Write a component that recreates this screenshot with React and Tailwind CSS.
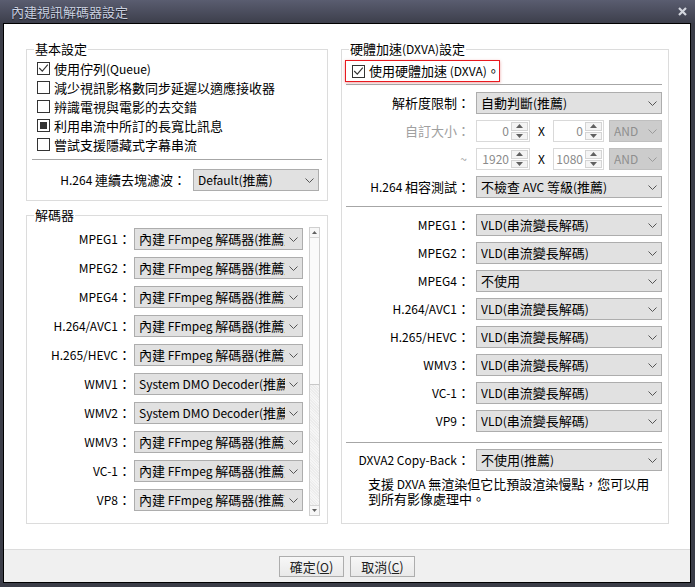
import React from "react";

function T({ children }) {
  const parts = String(children).split(/([\x20-\x7E]+)/);
  return parts.map((p, i) =>
    p === "" ? null : /^[\x20-\x7E]+$/.test(p) ? (
      <span key={i} className="text-[12px]">
        {p}
      </span>
    ) : (
      <React.Fragment key={i}>{p}</React.Fragment>
    )
  );
}

function Chevron({ color = "#555" }) {
  return (
    <svg width="9" height="5" viewBox="0 0 9 5">
      <path d="M0.5 0.5 L4.5 4.5 L8.5 0.5" fill="none" stroke={color} strokeWidth="1" />
    </svg>
  );
}

function Select({ text, className = "", disabled = false }) {
  return (
    <div
      className={`flex h-[22px] shrink-0 items-center border pl-[4px] ${
        disabled ? "border-[#bfbfbf] bg-[#cccccc] text-[#8f8f8f]" : "border-[#adadad] bg-[#e1e1e1] text-black"
      } ${className}`}
    >
      <span className="flex-1 overflow-hidden whitespace-nowrap leading-[20px]">
        <T>{text}</T>
      </span>
      <span className="flex w-[17px] shrink-0 justify-center">
        <Chevron color={disabled ? "#9a9a9a" : "#555"} />
      </span>
    </div>
  );
}

function Check({ state }) {
  return (
    <div className="flex h-[13px] w-[13px] shrink-0 items-center justify-center border border-[#333333] bg-white">
      {state === "on" && (
        <svg width="11" height="11" viewBox="0 0 11 11">
          <path d="M1.2 5 L4.3 8.2 L9.8 1.6" fill="none" stroke="#333" strokeWidth="1.1" />
        </svg>
      )}
      {state === "mixed" && <div className="h-[7px] w-[7px] bg-[#333333]" />}
    </div>
  );
}

function Tri({ up }) {
  return (
    <svg width="7" height="4" viewBox="0 0 7 4">
      {up ? <path d="M0 4 L3.5 0 L7 4 Z" fill="#606060" /> : <path d="M0 0 L3.5 4 L7 0 Z" fill="#606060" />}
    </svg>
  );
}

function Spin({ value, className = "" }) {
  return (
    <div className={`flex h-[22px] shrink-0 border border-[#d9d9d9] bg-white ${className}`}>
      <span className="flex-1 pr-[2px] text-right text-[12px] leading-[20px] text-[#8a8a8a]">{value}</span>
      <div className="flex w-[18px] flex-col gap-[1px] py-[1px] pr-[1px]">
        <div className="flex flex-1 items-center justify-center border border-[#d4d4d4] bg-[#f4f4f4]">
          <Tri up />
        </div>
        <div className="flex flex-1 items-center justify-center border border-[#d4d4d4] bg-[#f4f4f4]">
          <Tri />
        </div>
      </div>
    </div>
  );
}

function Sep({ className = "" }) {
  return <div className={`h-[1px] bg-[#a6a6a6] ${className}`} />;
}

const basic = [
  ["on", "使用佇列(Queue)"],
  ["off", "減少視訊影格數同步延遲以適應接收器"],
  ["off", "辨識電視與電影的去交錯"],
  ["mixed", "利用串流中所訂的長寬比訊息"],
  ["off", "嘗試支援隱藏式字幕串流"],
];

const FF = "內建 FFmpeg 解碼器(推薦)";
const decoders = [
  ["MPEG1", FF],
  ["MPEG2", FF],
  ["MPEG4", FF],
  ["H.264/AVC1", FF],
  ["H.265/HEVC", FF],
  ["WMV1", "System DMO Decoder(推薦)"],
  ["WMV2", "System DMO Decoder(推薦)"],
  ["WMV3", FF],
  ["VC-1", FF],
  ["VP8", FF],
];

const VLD = "VLD(串流變長解碼)";
const hw = [
  ["MPEG1", VLD],
  ["MPEG2", VLD],
  ["MPEG4", "不使用"],
  ["H.264/AVC1", VLD],
  ["H.265/HEVC", VLD],
  ["WMV3", VLD],
  ["VC-1", VLD],
  ["VP9", VLD],
];

function Legend({ children }) {
  return (
    <legend className="ml-[7px] px-[1px] leading-[14px] text-black">
      <T>{children}</T>
    </legend>
  );
}

export default function App() {
  return (
    <div className="flex h-[587px] w-[695px] flex-col bg-[#3b3d48] font-['Noto_Sans_CJK_TC',sans-serif] text-[13px] leading-[16px] text-black">
      {/* title bar */}
      <div className="flex h-[23px] shrink-0 items-center justify-between bg-gradient-to-b from-[#5a5d70] to-[#3d3f4c] pl-[11px] pr-[8px]">
        <span className="text-[13px] leading-[16px] text-[#c9d0e0] [text-shadow:0_1px_1px_#1c1d24]">內建視訊解碼器設定</span>
        <svg width="9" height="9" viewBox="0 0 9 9">
          <path d="M1 1 L8 8 M8 1 L1 8" stroke="#d3d6de" strokeWidth="2.2" />
        </svg>
      </div>

      {/* client */}
      <div className="mb-[4px] ml-[3px] mr-[4px] flex flex-1 flex-col border border-black bg-white">
        <div className="flex flex-1 gap-[13px] pl-[22px] pt-[18px]">
          {/* left column */}
          <div className="flex w-[302px] flex-col gap-[7px]">
            <fieldset className="h-[159px] border border-[#dcdcdc]">
              <Legend>基本設定</Legend>
              <div className="flex flex-col pt-[3px]">
                {basic.map(([s, t]) => (
                  <div key={t} className="flex h-[19px] items-center gap-[4px] pl-[10px]">
                    <Check state={s} />
                    <span className="whitespace-nowrap">
                      <T>{t}</T>
                    </span>
                  </div>
                ))}
                <Sep className="mx-[5px] mt-[5px]" />
                <div className="mt-[9px] flex items-center justify-end gap-[7px] pr-[8px]">
                  <span className="whitespace-nowrap">
                    <T>H.264 連續去塊濾波：</T>
                  </span>
                  <Select text="Default(推薦)" className="w-[126px]" />
                </div>
              </div>
            </fieldset>

            <fieldset className="h-[316px] border border-[#dcdcdc]">
              <Legend>解碼器</Legend>
              <div className="flex pt-[5px]">
                <div className="flex flex-col gap-[7px] pt-[1px]">
                  {decoders.map(([l, v]) => (
                    <div key={l} className="flex h-[22px] items-center gap-[3px]">
                      <span className="w-[104px] whitespace-nowrap text-right">
                        <T>{l}</T>：
                      </span>
                      <Select text={v} className="w-[169px]" />
                    </div>
                  ))}
                </div>
                {/* scrollbar */}
                <div className="ml-[6px] flex h-[289px] w-[11px] flex-col border border-[#cfcfcf] bg-[#f1f1f1]">
                  <div className="flex h-[10px] items-center justify-center border-b border-[#d6d6d6] bg-[#f7f7f7]">
                    <svg width="5" height="3" viewBox="0 0 5 3">
                      <path d="M0 3 L2.5 0 L5 3 Z" fill="#606060" />
                    </svg>
                  </div>
                  <div className="h-[147px] border-b border-[#c8c8c8] bg-[#fafafa]" />
                  <div className="flex-1 bg-[repeating-linear-gradient(45deg,#ececec_0px,#ececec_1px,#f6f6f6_1px,#f6f6f6_2px)]" />
                  <div className="flex h-[10px] items-center justify-center border-t border-[#d6d6d6] bg-[#f7f7f7]">
                    <svg width="5" height="3" viewBox="0 0 5 3">
                      <path d="M0 0 L2.5 3 L5 0 Z" fill="#606060" />
                    </svg>
                  </div>
                </div>
              </div>
            </fieldset>
          </div>

          {/* right column */}
          <fieldset className="h-[482px] w-[328px] border border-[#dcdcdc]">
            <Legend>硬體加速(DXVA)設定</Legend>
            <div className="flex flex-col">
              <div className="ml-[3px] mt-[4px] flex h-[22px] w-[155px] items-center gap-[4px] border border-[#e8191f] pl-[6px] shadow-[0_1px_3px_rgba(200,0,0,0.35)]">
                <Check state="on" />
                <span className="whitespace-nowrap">
                  <T>使用硬體加速 (DXVA)。</T>
                </span>
              </div>
              <Sep className="ml-[4px] mr-[6px] mt-[2px]" />

              <div className="mt-[7px] flex h-[22px] items-center gap-[6px]">
                <span className="w-[128px] whitespace-nowrap text-right">解析度限制：</span>
                <Select text="自動判斷(推薦)" className="w-[186px]" />
              </div>
              <div className="mt-[6px] flex h-[22px] items-center">
                <span className="w-[128px] whitespace-nowrap text-right text-[#a0a0a0]">自訂大小：</span>
                <Spin value="0" className="ml-[6px] w-[54px]" />
                <span className="w-[23px] text-center text-[12px] text-black">X</span>
                <Spin value="0" className="w-[51px]" />
                <Select text="AND" className="ml-[5px] w-[53px]" disabled />
              </div>
              <div className="mt-[6px] flex h-[22px] items-center">
                <span className="w-[128px] whitespace-nowrap pr-[3px] text-right text-[12px] text-[#a0a0a0]">~</span>
                <Spin value="1920" className="ml-[6px] w-[54px]" />
                <span className="w-[23px] text-center text-[12px] text-black">X</span>
                <Spin value="1080" className="w-[51px]" />
                <Select text="AND" className="ml-[5px] w-[53px]" disabled />
              </div>
              <div className="mt-[6px] flex h-[22px] items-center gap-[6px]">
                <span className="w-[128px] whitespace-nowrap text-right">
                  <T>H.264 相容測試：</T>
                </span>
                <Select text="不檢查 AVC 等級(推薦)" className="w-[186px]" />
              </div>

              <Sep className="ml-[4px] mr-[6px] mt-[8px]" />

              <div className="mt-[7px] flex flex-col gap-[6px]">
                {hw.map(([l, v]) => (
                  <div key={l} className="flex h-[22px] items-center gap-[6px]">
                    <span className="w-[128px] whitespace-nowrap text-right">
                      <T>{l}</T>：
                    </span>
                    <Select text={v} className="w-[186px]" />
                  </div>
                ))}
              </div>

              <Sep className="ml-[4px] mr-[6px] mt-[10px]" />

              <div className="mt-[6px] flex h-[22px] items-center gap-[6px]">
                <span className="w-[128px] whitespace-nowrap text-right">
                  <T>DXVA2 Copy-Back</T>：
                </span>
                <Select text="不使用(推薦)" className="w-[186px]" />
              </div>
              <p className="mt-[5px] whitespace-nowrap pl-[26px] leading-[15px]">
                <T>支援 DXVA 無渲染但它比預設渲染慢點，您可以用</T>
                <br />
                到所有影像處理中。
              </p>
            </div>
          </fieldset>
        </div>

        {/* footer */}
        <div className="flex h-[33px] shrink-0 items-start justify-center gap-[6px] border-t border-[#dcdcdc] bg-[#f0f0f0] pt-[6px]">
          <button className="flex h-[21px] w-[65px] items-center justify-center border border-[#adadad] bg-gradient-to-b from-[#f7f7f7] to-[#e9e9e9] leading-[16px] text-[#222]">
            確定(<span className="text-[12px] underline">O</span>)
          </button>
          <button className="flex h-[21px] w-[65px] items-center justify-center border border-[#adadad] bg-gradient-to-b from-[#f7f7f7] to-[#e9e9e9] leading-[16px] text-[#222]">
            取消(<span className="text-[12px] underline">C</span>)
          </button>
        </div>
      </div>
    </div>
  );
}
